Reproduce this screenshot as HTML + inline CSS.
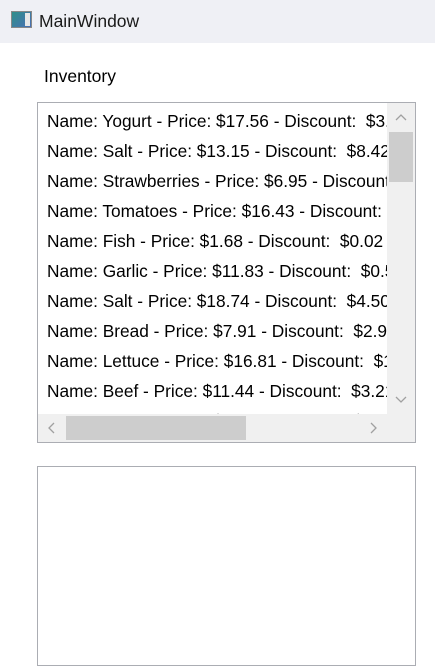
<!DOCTYPE html>
<html><head><style>
*{margin:0;padding:0;box-sizing:border-box}
body{width:435px;height:651px;background:#fff;position:relative;overflow:hidden;font-family:"Liberation Sans",sans-serif;color:#000}
.title{position:absolute;left:0;top:0;width:435px;height:43px;background:#eff0f5}
.title span{position:absolute;left:39px;top:11px;font-size:17.5px;color:#1a1a1a}
.icon{position:absolute;left:11px;top:11px;width:21px;height:17px;border:1px solid #888;background:linear-gradient(135deg,#2f8f8a,#4a6fb5)}
.icon:after{content:"";position:absolute;right:1px;top:1px;width:5px;height:13px;background:#e8e8e8}
.lbl{position:absolute;left:44px;top:66px;font-size:17.5px}
.box{position:absolute;left:37px;top:102px;width:379px;height:341px;border:1px solid #abadb3;overflow:hidden}
.rows{position:absolute;left:9px;top:0;width:340px;height:311px;overflow:hidden;white-space:nowrap;font-size:17.3px;padding-top:3px}
.rows div{height:30px;line-height:30px}
.vs{position:absolute;left:349px;top:0;width:28px;height:310px;background:#f0f0f0}
.vt{position:absolute;left:2px;top:29px;width:24px;height:50px;background:#cdcdcd}
.hs{position:absolute;left:0;top:311px;width:349px;height:28px;background:#f0f0f0}
.ht{position:absolute;left:28px;top:2px;width:180px;height:24px;background:#cdcdcd}
.corner{position:absolute;left:349px;top:310px;width:28px;height:29px;background:#f0f0f0}
.box2{position:absolute;left:37px;top:466px;width:379px;height:200px;border:1px solid #abadb3}
svg{position:absolute}
</style></head><body>
<div class="title"><div class="icon"></div><span>MainWindow</span></div>
<div class="lbl">Inventory</div>
<div class="box">
<div class="rows">
<div>Name: Yogurt - Price: $17.56 - Discount:&nbsp; $3.12</div>
<div>Name: Salt - Price: $13.15 - Discount:&nbsp; $8.42</div>
<div>Name: Strawberries - Price: $6.95 - Discount: $1.00</div>
<div>Name: Tomatoes - Price: $16.43 - Discount:&nbsp; $2.10</div>
<div>Name: Fish - Price: $1.68 - Discount:&nbsp; $0.02</div>
<div>Name: Garlic - Price: $11.83 - Discount:&nbsp; $0.50</div>
<div>Name: Salt - Price: $18.74 - Discount:&nbsp; $4.50</div>
<div>Name: Bread - Price: $7.91 - Discount:&nbsp; $2.90</div>
<div>Name: Lettuce - Price: $16.81 - Discount:&nbsp; $1.10</div>
<div>Name: Beef - Price: $11.44 - Discount:&nbsp; $3.21</div>
<div>Name: Onion - Price: $3.17 - Discount:&nbsp; $1.00</div>
</div>
<div class="vs"><div class="vt"></div>
<svg style="left:8px;top:10px" width="12" height="8"><path d="M1 7 L6 2 L11 7" fill="none" stroke="#a0a0a0" stroke-width="1.3"/></svg>
<svg style="left:8px;top:293px" width="12" height="8"><path d="M1 1 L6 6 L11 1" fill="none" stroke="#a0a0a0" stroke-width="1.3"/></svg>
</div>
<div class="hs"><div class="ht"></div>
<svg style="left:9px;top:8px" width="8" height="12"><path d="M7 1 L2 6 L7 11" fill="none" stroke="#a0a0a0" stroke-width="1.3"/></svg>
<svg style="left:332px;top:8px" width="8" height="12"><path d="M1 1 L6 6 L1 11" fill="none" stroke="#a0a0a0" stroke-width="1.3"/></svg>
</div>
<div class="corner"></div>
</div>
<div class="box2"></div>
</body></html>
